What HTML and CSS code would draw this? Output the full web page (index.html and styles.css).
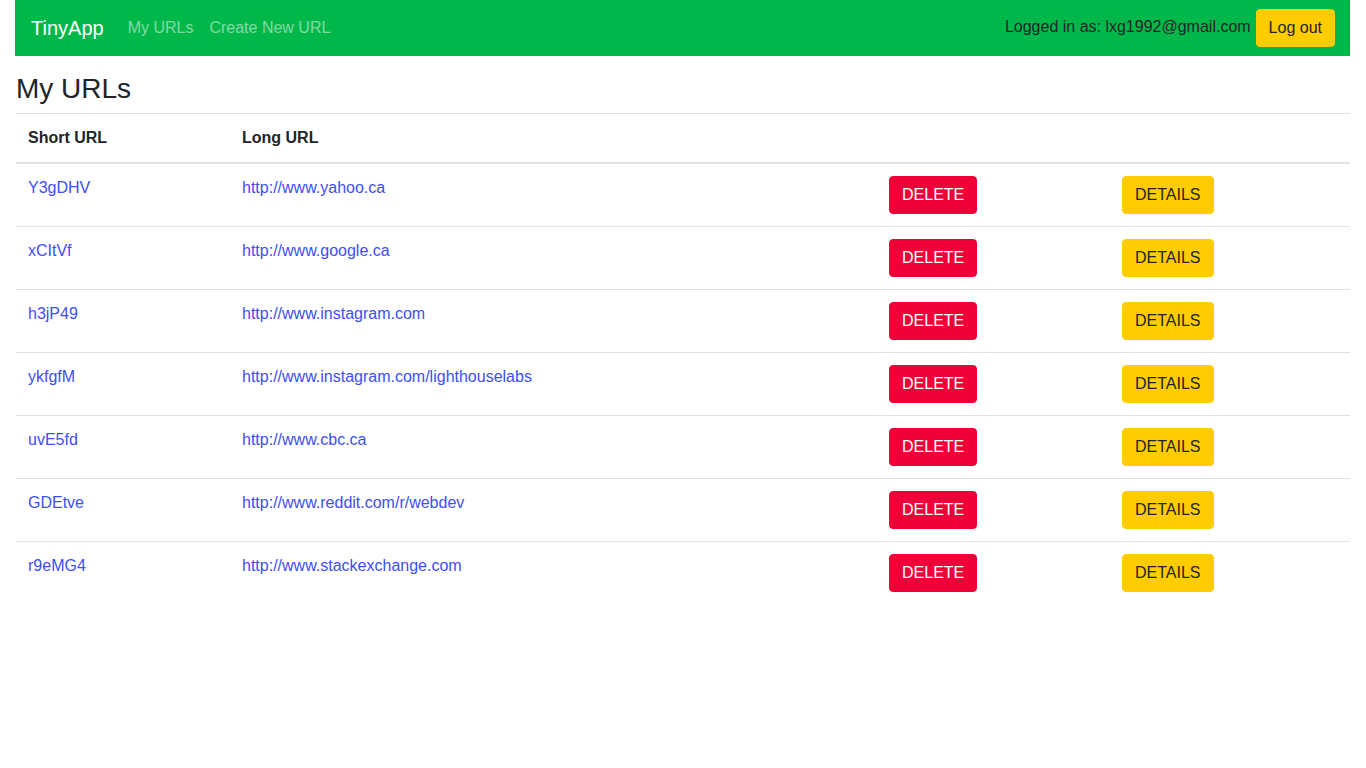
FILE: index.html
```html
<!DOCTYPE html>
<html lang="en">
<head>
<meta charset="utf-8">
<title>TinyApp</title>
<link rel="stylesheet" href="styles.css">
</head>
<body>
<nav class="navbar">
  <div class="nav-left">
    <a class="brand" href="#">TinyApp</a>
    <a class="nav-link" href="#">My URLs</a>
    <a class="nav-link" href="#">Create New URL</a>
  </div>
  <div class="nav-right">
    <span class="login-text">Logged in as: lxg1992@gmail.com</span>
    <button class="btn btn-yellow" type="button">Log out</button>
  </div>
</nav>
<main class="content">
  <h3 class="title">My URLs</h3>
  <table class="url-table">
    <thead>
      <tr>
        <th class="c-short">Short URL</th>
        <th class="c-long">Long URL</th>
        <th class="c-del"></th>
        <th class="c-det"></th>
      </tr>
    </thead>
    <tbody>
      <tr><td><a href="#">Y3gDHV</a></td><td><a href="#">http://www.yahoo.ca</a></td><td><button class="btn btn-red">DELETE</button></td><td><button class="btn btn-yellow">DETAILS</button></td></tr>
      <tr><td><a href="#">xCItVf</a></td><td><a href="#">http://www.google.ca</a></td><td><button class="btn btn-red">DELETE</button></td><td><button class="btn btn-yellow">DETAILS</button></td></tr>
      <tr><td><a href="#">h3jP49</a></td><td><a href="#">http://www.instagram.com</a></td><td><button class="btn btn-red">DELETE</button></td><td><button class="btn btn-yellow">DETAILS</button></td></tr>
      <tr><td><a href="#">ykfgfM</a></td><td><a href="#">http://www.instagram.com/lighthouselabs</a></td><td><button class="btn btn-red">DELETE</button></td><td><button class="btn btn-yellow">DETAILS</button></td></tr>
      <tr><td><a href="#">uvE5fd</a></td><td><a href="#">http://www.cbc.ca</a></td><td><button class="btn btn-red">DELETE</button></td><td><button class="btn btn-yellow">DETAILS</button></td></tr>
      <tr><td><a href="#">GDEtve</a></td><td><a href="#">http://www.reddit.com/r/webdev</a></td><td><button class="btn btn-red">DELETE</button></td><td><button class="btn btn-yellow">DETAILS</button></td></tr>
      <tr><td><a href="#">r9eMG4</a></td><td><a href="#">http://www.stackexchange.com</a></td><td><button class="btn btn-red">DELETE</button></td><td><button class="btn btn-yellow">DETAILS</button></td></tr>
    </tbody>
  </table>
</main>
</body>
</html>
```

FILE: styles.css
```css
* { box-sizing: border-box; }

body {
  margin: 0;
  font-family: "Liberation Sans", Arial, sans-serif;
  font-size: 16px;
  line-height: 1.5;
  color: #212529;
  background: #fff;
}

.navbar {
  margin: 0 16px 0 15px;
  height: 56px;
  padding: 8px 15px 8px 16px;
  background: #00b84a;
  display: flex;
  align-items: center;
  justify-content: space-between;
}

.nav-left {
  display: flex;
  align-items: center;
}

.brand {
  font-size: 20px;
  line-height: 30px;
  padding: 5px 0;
  margin-right: 16px;
  color: #fff;
  text-decoration: none;
}

.nav-link {
  padding: 8px;
  color: rgba(255, 255, 255, 0.5);
  text-decoration: none;
}

.nav-right {
  display: flex;
  align-items: center;
  gap: 5px;
}

.login-text {
  color: #212529;
  margin-top: -2px;
}

.btn {
  font-family: inherit;
  font-size: 16px;
  line-height: 24px;
  padding: 6px 12px;
  border: 1px solid transparent;
  border-radius: 4px;
  cursor: pointer;
}

.btn-yellow {
  background: #ffcc00;
  border-color: #ffcc00;
  color: #212529;
}

.btn-red {
  background: #ef0038;
  border-color: #ef0038;
  color: #fff;
}

.content {
  padding: 0 16px;
}

.title {
  margin: 16px 0 7px;
  font-size: 28px;
  font-weight: 500;
  line-height: 1.2;
}

.url-table {
  width: 100%;
  border-collapse: collapse;
}

.url-table th,
.url-table td {
  padding: 12px;
  text-align: left;
  vertical-align: top;
  border-top: 1px solid #dee2e6;
}

.url-table thead th {
  font-weight: bold;
  vertical-align: bottom;
  border-bottom: 2px solid #dee2e6;
}

.c-short { width: 214px; }
.c-long { width: 647px; }
.c-del { width: 233px; }

.url-table a {
  color: #3d4ef5;
  text-decoration: none;
}
```
